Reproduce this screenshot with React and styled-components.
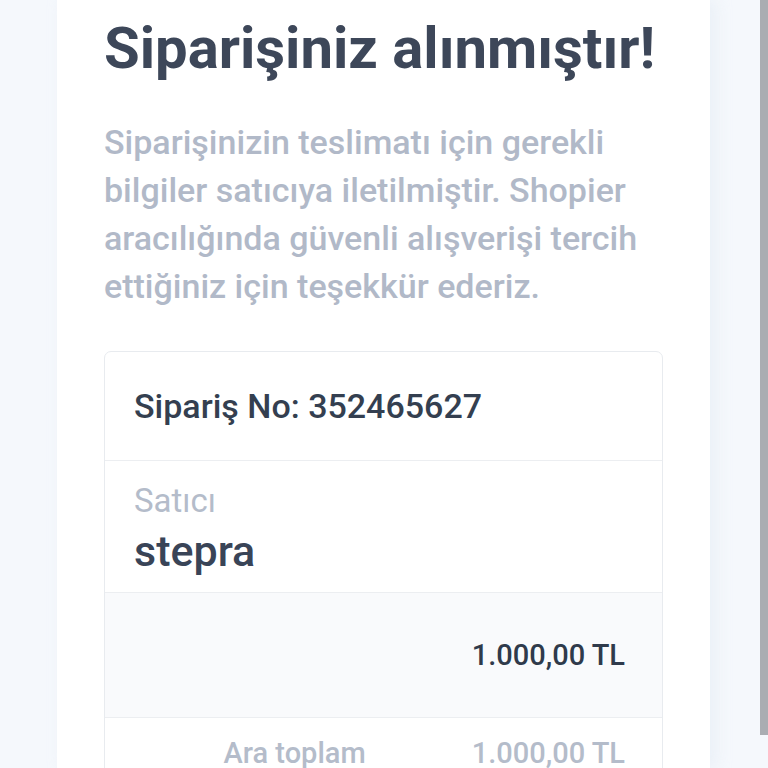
import React from "react";
import styled, { createGlobalStyle } from "styled-components";

const Global = createGlobalStyle`
  html, body { margin: 0; padding: 0; background: #f5f8fc; }
  body { font-family: Roboto, "Noto Sans", "Liberation Sans", sans-serif; overflow: hidden; }
`;

const Page = styled.div`
  height: 768px;
  display: flex;
  padding-left: 57px;
  overflow: hidden;
`;

const Panel = styled.main`
  width: 653px;
  background: #ffffff;
  padding: 13px 47px 0 47px;
  box-sizing: border-box;
  box-shadow: 6px 0 14px rgba(230, 236, 245, 0.7);
`;

const Title = styled.h1`
  margin: 0;
  font-size: 58px;
  line-height: 71px;
  font-weight: 700;
  color: #3d4759;
`;

const Lead = styled.p`
  margin: 34px 0 0;
  font-size: 34px;
  line-height: 48px;
  font-weight: 500;
  color: #b1b9c8;
  white-space: nowrap;
`;

const Card = styled.section`
  margin-top: 41px;
  width: 559px;
  border: 1px solid #e8ebef;
  border-radius: 7px;
  box-sizing: border-box;
`;

const Row = styled.div`
  display: flex;
  flex-direction: column;
  justify-content: ${(p) => (p.$top ? "flex-start" : "center")};
  align-items: ${(p) => (p.$align === "end" ? "flex-end" : "flex-start")};
  padding: ${(p) => p.$top || 0}px 37px 0 29px;
  height: ${(p) => p.$h}px;
  background: ${(p) => (p.$muted ? "#f9fafc" : "transparent")};
  border-top: ${(p) => (p.$first ? "none" : "1px solid #eceef1")};
  box-sizing: border-box;
`;

const OrderNo = styled.div`
  font-size: 34px;
  font-weight: 500;
  color: #343f50;
`;

const Label = styled.div`
  font-size: 33px;
  font-weight: 400;
  color: #b4bcca;
  line-height: 40px;
`;

const Seller = styled.div`
  margin-top: 5px;
  font-size: 43px;
  font-weight: 500;
  color: #394457;
  line-height: 50px;
`;

const Amount = styled.span`
  font-size: 29px;
  line-height: 36px;
  font-weight: 500;
  color: ${(p) => (p.$muted ? "#b4bcca" : "#2f3a4b")};
`;

const TotalLine = styled.div`
  display: flex;
  justify-content: flex-end;
  gap: 106px;
  width: 100%;
`;

const Scrollbar = styled.div`
  position: fixed;
  top: 0;
  right: 0;
  width: 8px;
  height: 735px;
  background: #aaadb2;
`;

export default function App() {
  return (
    <>
      <Global />
      <Page>
        <Panel>
          <Title>Siparişiniz alınmıştır!</Title>
          <Lead>
            Siparişinizin teslimatı için gerekli
            <br />
            bilgiler satıcıya iletilmiştir. Shopier
            <br />
            aracılığında güvenli alışverişi tercih
            <br />
            ettiğiniz için teşekkür ederiz.
          </Lead>
          <Card>
            <Row $first $h={108}>
              <OrderNo>Sipariş No: 352465627</OrderNo>
            </Row>
            <Row $h={132} $top={20}>
              <Label>Satıcı</Label>
              <Seller>stepra</Seller>
            </Row>
            <Row $h={125} $muted $align="end">
              <Amount>1.000,00 TL</Amount>
            </Row>
            <Row $h={80} $top={17} $align="end">
              <TotalLine>
                <Amount $muted>Ara toplam</Amount>
                <Amount $muted>1.000,00 TL</Amount>
              </TotalLine>
            </Row>
          </Card>
        </Panel>
      </Page>
      <Scrollbar />
    </>
  );
}
